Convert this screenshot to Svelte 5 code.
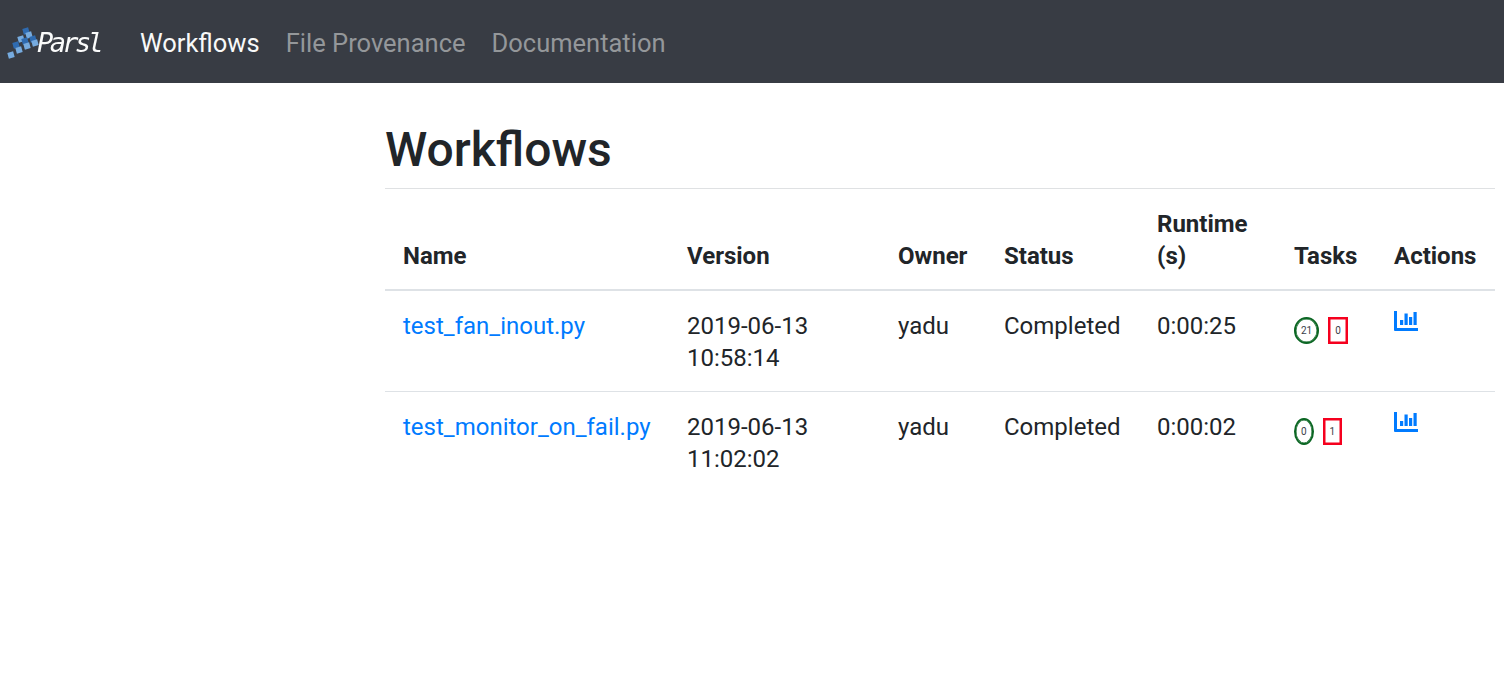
<script lang="ts">
  const workflows = [
    { name: 'test_fan_inout.py', date: '2019-06-13', time: '10:58:14', owner: 'yadu', status: 'Completed', runtime: '0:00:25', ok: 21, failed: 0 },
    { name: 'test_monitor_on_fail.py', date: '2019-06-13', time: '11:02:02', owner: 'yadu', status: 'Completed', runtime: '0:00:02', ok: 0, failed: 1 }
  ];

  // logo squares, centre x/y inside the 36x34 mark
  const squares = [
    { x: 20, y: 5, dark: true },
    { x: 23, y: 9, dark: false },
    { x: 15, y: 13, dark: false },
    { x: 19, y: 15, dark: true },
    { x: 27, y: 13, dark: true },
    { x: 29, y: 17, dark: false },
    { x: 10, y: 19, dark: true },
    { x: 21, y: 20, dark: false },
    { x: 13, y: 24, dark: false },
    { x: 5, y: 29, dark: false }
  ];
</script>

<nav class="navbar">
  <a class="brand" href="#top">
    <svg class="logo-mark" width="36" height="34" viewBox="0 0 36 34" aria-hidden="true">
      {#each squares as s}
        <rect
          x={s.x - 3}
          y={s.y - 3}
          width="6"
          height="6"
          fill={s.dark ? '#2f6bb0' : '#76abdf'}
          transform="rotate(-15 {s.x} {s.y})"
        />
      {/each}
    </svg>
    <span class="brand-name">Parsl</span>
  </a>
  <ul class="nav-links">
    <li><a class="active" href="#top">Workflows</a></li>
    <li><a href="#top">File Provenance</a></li>
    <li><a href="#top">Documentation</a></li>
  </ul>
</nav>

<main class="page">
  <div class="content">
    <h1>Workflows</h1>
    <hr />
    <table>
      <colgroup>
        <col class="c-name" /><col class="c-version" /><col class="c-owner" /><col class="c-status" />
        <col class="c-runtime" /><col class="c-tasks" /><col class="c-actions" />
      </colgroup>
      <thead>
        <tr>
          <th>Name</th><th>Version</th><th>Owner</th><th>Status</th><th>Runtime (s)</th><th>Tasks</th><th>Actions</th>
        </tr>
      </thead>
      <tbody>
        {#each workflows as w}
          <tr>
            <td><a href="#top">{w.name}</a></td>
            <td>{w.date}<br />{w.time}</td>
            <td>{w.owner}</td>
            <td>{w.status}</td>
            <td>{w.runtime}</td>
            <td class="tasks">
              <span class="badge ok">{w.ok}</span>
              <span class="badge failed">{w.failed}</span>
            </td>
            <td>
              <a class="chart" href="#top" aria-label="Charts">
                <svg width="24" height="20" viewBox="0 0 24 20" fill="currentColor" aria-hidden="true">
                  <path d="M0 0h3v17h21v3H1a1 1 0 0 1-1-1z" />
                  <rect x="6" y="9" width="3.2" height="5" />
                  <rect x="10.5" y="2.5" width="3.2" height="11.5" />
                  <rect x="15" y="6" width="3.2" height="8" />
                  <rect x="19.5" y="1" width="3.2" height="13" />
                </svg>
              </a>
            </td>
          </tr>
        {/each}
      </tbody>
    </table>
  </div>
</main>

<style>
  :global(body) {
    margin: 0;
    background: #fff;
    color: #212529;
    font-family: Roboto, "Liberation Sans", sans-serif;
    font-size: 24px;
    line-height: 32px;
  }
  a { text-decoration: none; }

  .navbar {
    display: flex;
    align-items: center;
    height: 83px;
    background: #383c44;
  }
  .brand {
    display: flex;
    align-items: center;
    width: 127px;
    height: 100%;
    padding-left: 6px;
    box-sizing: border-box;
    color: #fafbfb;
    filter: blur(0.4px);
  }
  .logo-mark { flex: none; margin-top: 3px; margin-right: -5px; }
  .brand-name {
    font-family: "DejaVu Sans Mono", monospace;
    font-style: italic;
    font-size: 27px;
    letter-spacing: -3.6px;
    margin-top: 3px;
  }
  .nav-links {
    display: flex;
    gap: 26px;
    list-style: none;
    margin: 0;
    padding: 4px 0 0 13px;
  }
  .nav-links a { color: #94979a; font-size: 25.5px; }
  .nav-links a.active { color: #f8f9f9; }

  .page { padding-left: 385px; padding-right: 9px; }
  h1 {
    margin: 0;
    padding-top: 35px;
    font-size: 48px;
    font-weight: 500;
    line-height: 64px;
    height: 70px;
  }
  hr { margin: 0; border: 0; border-top: 1px solid #dfe1e3; }

  table { width: 100%; border-collapse: collapse; table-layout: fixed; }
  .c-name { width: 284px; }
  .c-version { width: 211px; }
  .c-owner { width: 106px; }
  .c-status { width: 153px; }
  .c-runtime { width: 137px; }
  .c-tasks { width: 100px; }

  th, td { padding: 19px 18px 17px; text-align: left; }
  th {
    vertical-align: bottom;
    font-weight: 700;
    border-bottom: 2px solid #dee2e6;
  }
  td { vertical-align: top; border-bottom: 1px solid #dee2e6; }
  tbody tr:last-child td { border-bottom: 0; }
  td a { color: #007bff; }

  .tasks { white-space: nowrap; }
  .badge {
    display: inline-block;
    box-sizing: border-box;
    height: 27px;
    margin-top: 7px;
    padding: 0 5px;
    font-size: 10px;
    line-height: 23px;
    vertical-align: top;
    color: #3a4048;
  }
  .ok { border: 2px solid #0b6623; border-radius: 50%; margin-right: 3px; box-shadow: inset 0 0 0 0.5px #0b6623; }
  .failed { border: 2px solid #f5001e; box-shadow: inset 0 0 0 0.5px #f5001e; }
  .chart { display: block; color: #007bff; line-height: 0; margin-top: 1px; }
</style>
